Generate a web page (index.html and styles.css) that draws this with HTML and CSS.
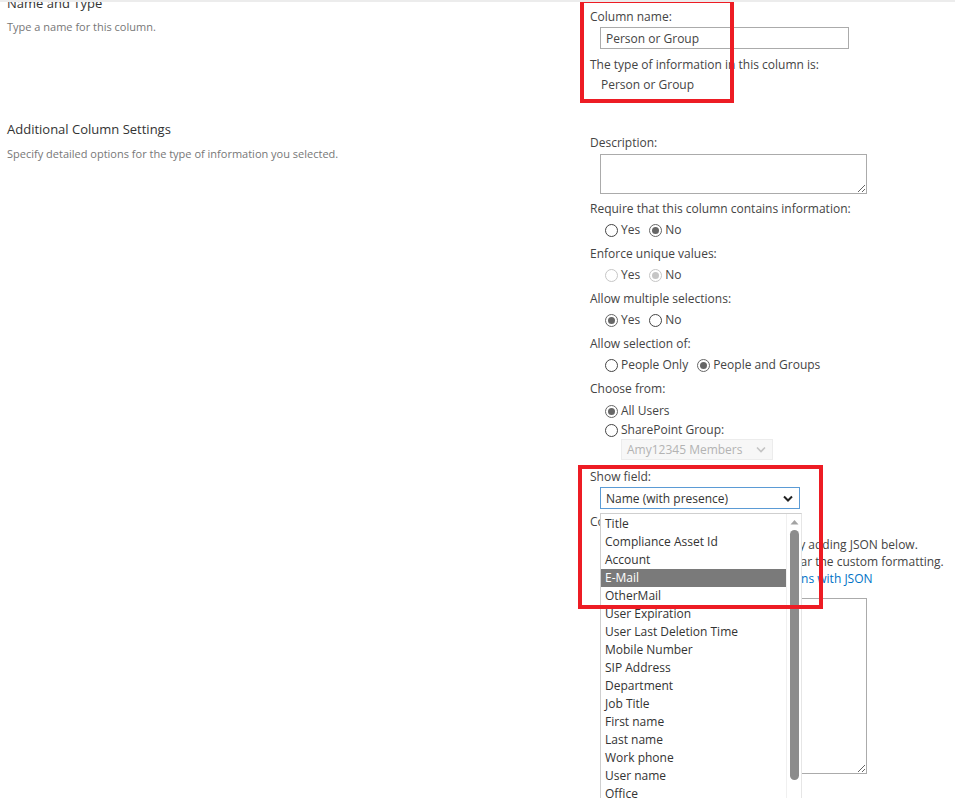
FILE: index.html
```html
<!DOCTYPE html>
<html lang="en">
<head>
  <meta charset="UTF-8">
  <meta name="viewport" content="width=device-width, initial-scale=1.0">
  <title>Create Column</title>
  <link rel="stylesheet" href="styles.css">
</head>
<body>
  <div class="page">
    <div class="form">

      <!-- Name and Type -->
      <div class="section section-name">
        <div class="section-info">
          <h3 class="section-title">Name and Type</h3>
          <p class="section-desc">Type a name for this column.</p>
        </div>
        <div class="section-fields">
          <div class="field-label">Column name:</div>
          <input class="text-input" type="text" value="Person or Group">
          <div class="field-label type-label">The type of information in this column is:</div>
          <div class="field-value">Person or Group</div>
        </div>
      </div>

      <!-- Additional Column Settings -->
      <div class="section section-settings">
        <div class="section-info">
          <h3 class="section-title">Additional Column Settings</h3>
          <p class="section-desc">Specify detailed options for the type of information you selected.</p>
        </div>
        <div class="section-fields">
          <div class="field-label">Description:</div>
          <textarea class="text-area desc-area"></textarea>

          <div class="field-label group-label">Require that this column contains information:</div>
          <div class="radio-row">
            <label class="radio"><span class="radio-dot"></span>Yes</label>
            <label class="radio"><span class="radio-dot checked"></span>No</label>
          </div>

          <div class="field-label group-label">Enforce unique values:</div>
          <div class="radio-row disabled">
            <label class="radio"><span class="radio-dot"></span>Yes</label>
            <label class="radio"><span class="radio-dot checked"></span>No</label>
          </div>

          <div class="field-label group-label">Allow multiple selections:</div>
          <div class="radio-row">
            <label class="radio"><span class="radio-dot checked"></span>Yes</label>
            <label class="radio"><span class="radio-dot"></span>No</label>
          </div>

          <div class="field-label group-label">Allow selection of:</div>
          <div class="radio-row">
            <label class="radio"><span class="radio-dot"></span>People Only</label>
            <label class="radio"><span class="radio-dot checked"></span>People and Groups</label>
          </div>

          <div class="field-label group-label">Choose from:</div>
          <div class="radio-list">
            <label class="radio"><span class="radio-dot checked"></span>All Users</label>
            <label class="radio"><span class="radio-dot"></span>SharePoint Group:</label>
            <div class="select select-disabled">
              <span>Amy12345 Members</span>
              <svg class="chevron" width="10" height="7" viewBox="0 0 10 7"><path d="M1 1.5 L5 5.5 L9 1.5" fill="none" stroke="#c4c4c4" stroke-width="1.6"/></svg>
            </div>
          </div>

          <div class="field-label show-label">Show field:</div>
          <div class="show-field">
            <div class="select select-focus">
              <span>Name (with presence)</span>
              <svg class="chevron" width="10" height="7" viewBox="0 0 10 7"><path d="M1 1.5 L5 5.5 L9 1.5" fill="none" stroke="#222" stroke-width="2"/></svg>
            </div>

            <!-- open dropdown list -->
            <div class="dropdown">
              <div class="dropdown-items">
                <div class="option">Title</div>
                <div class="option">Compliance Asset Id</div>
                <div class="option">Account</div>
                <div class="option selected">E-Mail</div>
                <div class="option">OtherMail</div>
                <div class="option">User Expiration</div>
                <div class="option">User Last Deletion Time</div>
                <div class="option">Mobile Number</div>
                <div class="option">SIP Address</div>
                <div class="option">Department</div>
                <div class="option">Job Title</div>
                <div class="option">First name</div>
                <div class="option">Last name</div>
                <div class="option">Work phone</div>
                <div class="option">User name</div>
                <div class="option">Office</div>
                <div class="option">Picture</div>
              </div>
              <div class="scrollbar">
                <svg class="scroll-arrow" width="9" height="6" viewBox="0 0 9 6"><path d="M0.5 5.5 L4.5 1 L8.5 5.5 Z" fill="#a3a3a3"/></svg>
                <div class="scroll-thumb"></div>
              </div>
            </div>
          </div>

          <div class="field-label format-label">Column formatting:</div>
          <div class="format-help">
            <div>Change the display of this column by adding JSON below.</div>
            <div>Remove the text from the box to clear the custom formatting.</div>
            <a class="help-link" href="#">Learn more about formatting columns with JSON</a>
          </div>
          <textarea class="text-area json-area"></textarea>
        </div>
      </div>
    </div>

    <!-- highlight boxes -->
    <div class="highlight highlight-name"></div>
    <div class="highlight highlight-show"></div>
  </div>
</body>
</html>
```

FILE: styles.css
```css
/* Page */
body {
  margin: 0;
  padding: 0;
  background: #fff;
  font-family: "Open Sans", "Noto Sans", sans-serif;
  font-size: 12px;
  color: #444;
  overflow: hidden;
}

.page {
  position: relative;
  height: 798px;
  overflow: hidden;
  border-top: 2px solid #ececec;
  box-sizing: border-box;
}

.form {
  margin-top: -8px;
}

/* Sections: info on the left, fields on the right */
.section {
  display: grid;
  grid-template-columns: 590px 1fr;
}

.section-info {
  padding-left: 7px;
}

.section-title {
  margin: 0;
  font-size: 13px;
  font-weight: normal;
  color: #333;
  line-height: 18px;
}

.section-desc {
  margin: 7px 0 0;
  font-size: 11px;
  color: #777;
  line-height: 16px;
}

.section-name .section-fields {
  padding-top: 14px;
}

.section-settings {
  margin-top: 26px;
}

.section-settings .section-desc {
  margin-top: 8px;
}

.section-settings .section-fields {
  padding-top: 14px;
}

/* Labels and values */
.field-label {
  line-height: 18px;
  white-space: nowrap;
}

.type-label {
  margin-top: 7px;
}

.field-value {
  margin-top: 2px;
  padding-left: 11px;
  line-height: 18px;
}

.group-label {
  margin-top: 6px;
}

/* Inputs */
.text-input {
  display: block;
  box-sizing: border-box;
  width: 249px;
  height: 22px;
  margin: 1px 0 0 10px;
  padding: 0 5px;
  border: 1px solid #ababab;
  font-family: inherit;
  font-size: 12px;
  color: #444;
}

.text-area {
  display: block;
  box-sizing: border-box;
  margin-left: 10px;
  border: 1px solid #ababab;
  font-family: inherit;
  resize: both;
}

.desc-area {
  width: 267px;
  height: 40px;
  margin-top: 2px;
  margin-bottom: 3px;
}

.json-area {
  width: 267px;
  height: 176px;
  margin-top: 11px;
}

/* Radios */
.radio-row {
  display: flex;
  gap: 9px;
  margin: 3px 0 0 15px;
  line-height: 18px;
}

.radio-list {
  margin: 4px 0 0 15px;
  line-height: 18px;
  display: flex;
  flex-direction: column;
  align-items: flex-start;
  gap: 1px;
}

.radio {
  display: flex;
  align-items: center;
  gap: 3px;
}

.radio-dot {
  box-sizing: border-box;
  width: 13px;
  height: 13px;
  border: 1px solid #444;
  border-radius: 50%;
  background: #fff;
  position: relative;
}

.radio-dot.checked {
  border-color: #666;
}

.radio-dot.checked::after {
  content: "";
  position: absolute;
  left: 2px;
  top: 2px;
  width: 7px;
  height: 7px;
  border-radius: 50%;
  background: #666;
}

.radio-row.disabled .radio-dot {
  border-color: #c6c6c6;
}

.radio-row.disabled .radio-dot.checked::after {
  background: #c6c6c6;
}

/* Selects */
.select {
  box-sizing: border-box;
  display: flex;
  align-items: center;
  justify-content: space-between;
  padding: 0 6px 0 5px;
}

.select-disabled {
  width: 152px;
  height: 21px;
  margin: -1px 0 0 16px;
  background: #f7f7f7;
  border: 1px solid #ececec;
  color: #b3b3b3;
}

.show-label {
  margin-top: 8px;
}

.show-field {
  position: relative;
  margin-left: 10px;
}

.select-focus {
  width: 200px;
  height: 22px;
  margin-top: 1px;
  border: 1px solid #5b9bd5;
  color: #333;
}

/* Open dropdown list (lies over the content below) */
.dropdown {
  position: absolute;
  left: 0;
  top: 26px;
  width: 202px;
  height: 300px;
  box-sizing: border-box;
  background: #fff;
  border: 1px solid #cfcfcf;
  border-right-color: #e6e6e6;
  z-index: 2;
}

.dropdown-items {
  padding-top: 1px;
  width: 186px;
}

.option {
  height: 18px;
  line-height: 18px;
  padding-left: 4px;
  color: #333;
  white-space: nowrap;
}

.option.selected {
  background: #7a7a7a;
  color: #fff;
}

.scrollbar {
  position: absolute;
  top: 0;
  right: 0;
  width: 14px;
  height: 100%;
  background: #fff;
  border-left: 1px solid #f0f0f0;
}

.scroll-arrow {
  display: block;
  margin: 5px auto 0;
}

.scroll-thumb {
  width: 9px;
  height: 250px;
  margin: 5px auto 0;
  border-radius: 5px;
  background: #8c8c8c;
}

/* Column formatting */
.format-label {
  margin-top: 4px;
}

.format-help {
  margin: 5px 0 0 10px;
  line-height: 17px;
  white-space: nowrap;
}

.help-link {
  color: #0072c6;
  text-decoration: none;
}

/* Red annotation boxes */
.highlight {
  position: absolute;
  border: 4px solid #ed1c24;
  z-index: 3;
}

.highlight-name {
  left: 580px;
  top: -3px;
  width: 146px;
  height: 96px;
}

.highlight-show {
  left: 578px;
  top: 463px;
  width: 237px;
  height: 136px;
}
```
